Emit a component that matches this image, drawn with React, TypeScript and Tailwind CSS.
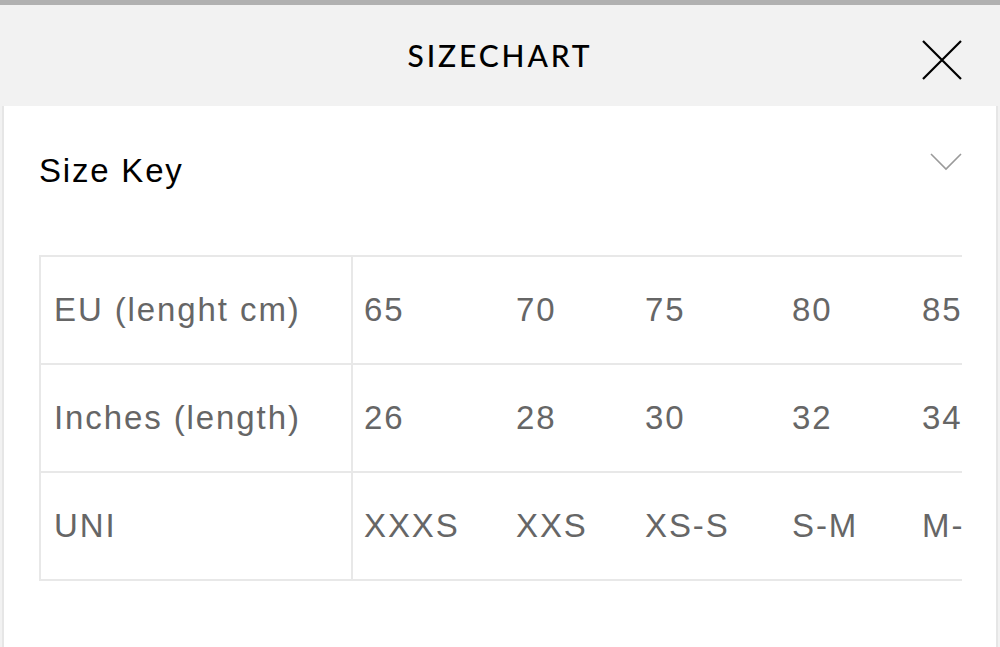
const rows = [
  { label: 'EU (lenght cm)', values: ['65', '70', '75', '80', '85'] },
  { label: 'Inches (length)', values: ['26', '28', '30', '32', '34'] },
  { label: 'UNI', values: ['XXXS', 'XXS', 'XS-S', 'S-M', 'M-L'] },
];

const colWidths = ['w-[152px]', 'w-[129px]', 'w-[147px]', 'w-[130px]', 'w-[130px]'];

function CloseIcon() {
  return (
    <svg width="42" height="40" viewBox="0 0 42 40" className="text-black">
      <path d="M2 1L40 39M40 1L2 39" stroke="currentColor" strokeWidth="2.2" fill="none" />
    </svg>
  );
}

function Chevron() {
  return (
    <svg width="32" height="20" viewBox="0 0 32 20" className="text-[#9a9a9a]">
      <path d="M1 2L16 17L31 2" stroke="currentColor" strokeWidth="1.6" fill="none" />
    </svg>
  );
}

export default function App() {
  return (
    <div className="flex h-[647px] w-[1000px] flex-col overflow-hidden bg-[#f2f2f2] font-['Liberation_Sans',Arial,sans-serif]">
      <div className="h-[5px] shrink-0 bg-[#b1b1b1]" />

      <header className="relative flex h-[101px] shrink-0 items-center justify-center">
        <span className="font-['Lato',sans-serif] text-[30px] font-medium tracking-[0.095em] text-black">
          SIZECHART
        </span>
        <button className="absolute right-[37px] top-[35px]">
          <CloseIcon />
        </button>
      </header>

      <div className="mx-[2px] flex-1 border-x-2 border-[#e6e6e6] bg-white">
        <div className="flex h-[149px] items-start justify-between pl-[35px] pr-[34px] pt-[46px]">
          <span className="pt-[2px] text-[33px] leading-[33px] tracking-[1.8px] text-black">Size Key</span>
          <Chevron />
        </div>

        <div className="ml-[35px] w-[923px] overflow-hidden">
          <table className="border-collapse text-[33px] tracking-[1.9px] text-[#666666]">
            <tbody>
              {rows.map(row => (
                <tr key={row.label} className="h-[108px]">
                  <td className="border-2 border-[#e8e8e8] p-0 align-middle whitespace-nowrap">
                    <div className="w-[310px] pl-[13px]">{row.label}</div>
                  </td>
                  {row.values.map((v, j) => (
                    <td
                      key={j}
                      className="border-y-2 border-[#e8e8e8] p-0 align-middle whitespace-nowrap"
                    >
                      <div className={`${colWidths[j]} pl-[11px]`}>{v}</div>
                    </td>
                  ))}
                </tr>
              ))}
            </tbody>
          </table>
        </div>
      </div>
    </div>
  );
}
